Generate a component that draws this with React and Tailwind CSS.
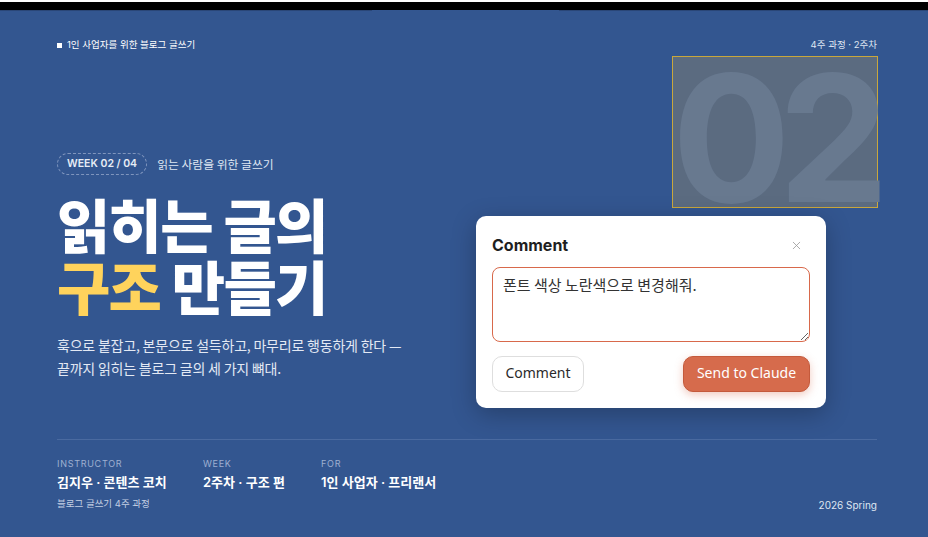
import { X } from 'lucide-react';

const kr = { fontFamily: '"Noto Sans CJK KR", "Noto Sans", sans-serif' };
const inter = { fontFamily: 'Inter, "Noto Sans CJK KR", sans-serif' };

function MetaCol({ label, value, width }) {
  return (
    <div className={width}>
      <div className="text-[9px] leading-[12px] tracking-[0.08em] text-[#9eb0d0]" style={inter}>{label}</div>
      <div className="mt-[3px] text-[13px] leading-[18px] font-semibold text-white" style={inter}>{value}</div>
    </div>
  );
}

function CommentPopup() {
  return (
    <div className="absolute left-[476px] top-[216px] w-[350px] rounded-[10px] bg-white px-4 pt-[18px] pb-4 shadow-[0_6px_24px_rgba(0,0,0,0.25)]">
      <div className="flex items-center justify-between">
        <h3 className="text-[16px] leading-[22px] font-bold text-[#1f1f1f]" style={inter}>Comment</h3>
        <X className="mr-[7px] h-[13px] w-[13px] text-[#9a9a9a]" strokeWidth={1.5} />
      </div>
      <textarea
        className="mt-[11px] block h-[75px] w-full rounded-[8px] border border-[#d8694b] px-[10px] pt-[7px] text-[15px] leading-[20px] text-[#333] outline-none"
        style={kr}
        defaultValue="폰트 색상 노란색으로 변경해줘."
      />
      <div className="mt-[14px] flex items-center justify-between">
        <button
          className="h-[36px] w-[92px] rounded-[10px] border border-[#dedede] bg-white pb-[3px] text-[14px] leading-[20px] text-[#2a2a2a]"
          style={{ fontFamily: '"Noto Sans", sans-serif' }}
        >
          Comment
        </button>
        <button
          className="h-[36px] w-[127px] rounded-[10px] border border-[#c45a3c] bg-[#d66b4c] pb-[3px] text-[14px] leading-[20px] text-white shadow-[0_3px_8px_rgba(214,107,76,0.35)]"
          style={{ fontFamily: '"Noto Sans", sans-serif' }}
        >
          Send to Claude
        </button>
      </div>
    </div>
  );
}

export default function App() {
  return (
    <div className="relative h-[537px] w-[928px] overflow-hidden bg-[#335690]">
      {/* browser chrome strip */}
      <div className="h-[2px] bg-white" />
      <div className="h-[8px] bg-black" />
      <div className="flex h-[1px]">
        <div className="w-[372px] bg-[#2a4677]" />
        <div className="w-[187px] bg-[#335690]" />
        <div className="flex-1 bg-[#2a4677]" />
      </div>

      <div className="flex flex-col pl-[57px] pr-[51px] pt-[27px]">
        <div className="flex items-center justify-between text-[9.5px] leading-[14px] text-white" style={inter}>
          <div className="flex items-center gap-[5px]">
            <span className="h-[5px] w-[5px] bg-white" />
            <span>1인 사업자를 위한 블로그 글쓰기</span>
          </div>
          <span className="text-[#dfe6f2]">4주 과정 · 2주차</span>
        </div>

        <div className="mt-[101px] flex items-center gap-[10px]">
          <span
            className="flex h-[22px] items-center rounded-full border border-dashed border-[#7f95bd] px-[9px] text-[10.5px] font-semibold text-[#e6ecf6]"
            style={inter}
          >
            WEEK 02 / 04
          </span>
          <span className="text-[11.8px] text-[#dfe6f2]" style={kr}>읽는 사람을 위한 글쓰기</span>
        </div>

        <h1 className="mt-[17px] text-[58px] leading-[62px] font-extrabold tracking-[-0.03em] text-white" style={kr}>
          읽히는 글의
          <br />
          <span className="text-[#ffd35c]">구조</span> 만들기
        </h1>

        <p className="mt-[18px] text-[14px] leading-[23px] tracking-[-0.015em] text-[#e3e9f4]" style={kr}>
          훅으로 붙잡고, 본문으로 설득하고, 마무리로 행동하게 한다 —
          <br />
          끝까지 읽히는 블로그 글의 세 가지 뼈대.
        </p>

        <div className="mt-[59px] border-t border-[#4a6aa0] pt-[18px]">
          <div className="flex">
            <MetaCol width="w-[146px]" label="INSTRUCTOR" value="김지우 · 콘텐츠 코치" />
            <MetaCol width="w-[118px]" label="WEEK" value="2주차 · 구조 편" />
            <MetaCol width="w-[160px]" label="FOR" value="1인 사업자 · 프리랜서" />
          </div>
          <div className="mt-[6px] flex items-start justify-between">
            <span className="text-[9.5px] leading-[13px] text-[#c3cfe3]" style={inter}>블로그 글쓰기 4주 과정</span>
            <span className="mt-[2px] text-[10px] leading-[13px] text-[#dfe6f2]" style={inter}>2026 Spring</span>
          </div>
        </div>
      </div>

      {/* selected decorative number */}
      <div className="absolute left-[672px] top-[56px] h-[152px] w-[206px] border border-[#c9a73c] bg-[#5b6b80]" />
      <div
        className="pointer-events-none absolute left-[672px] top-[50px] text-[176px] leading-none font-bold tracking-[-0.07em] text-[#68798f]"
        style={inter}
      >
        02
      </div>

      <CommentPopup />
    </div>
  );
}
